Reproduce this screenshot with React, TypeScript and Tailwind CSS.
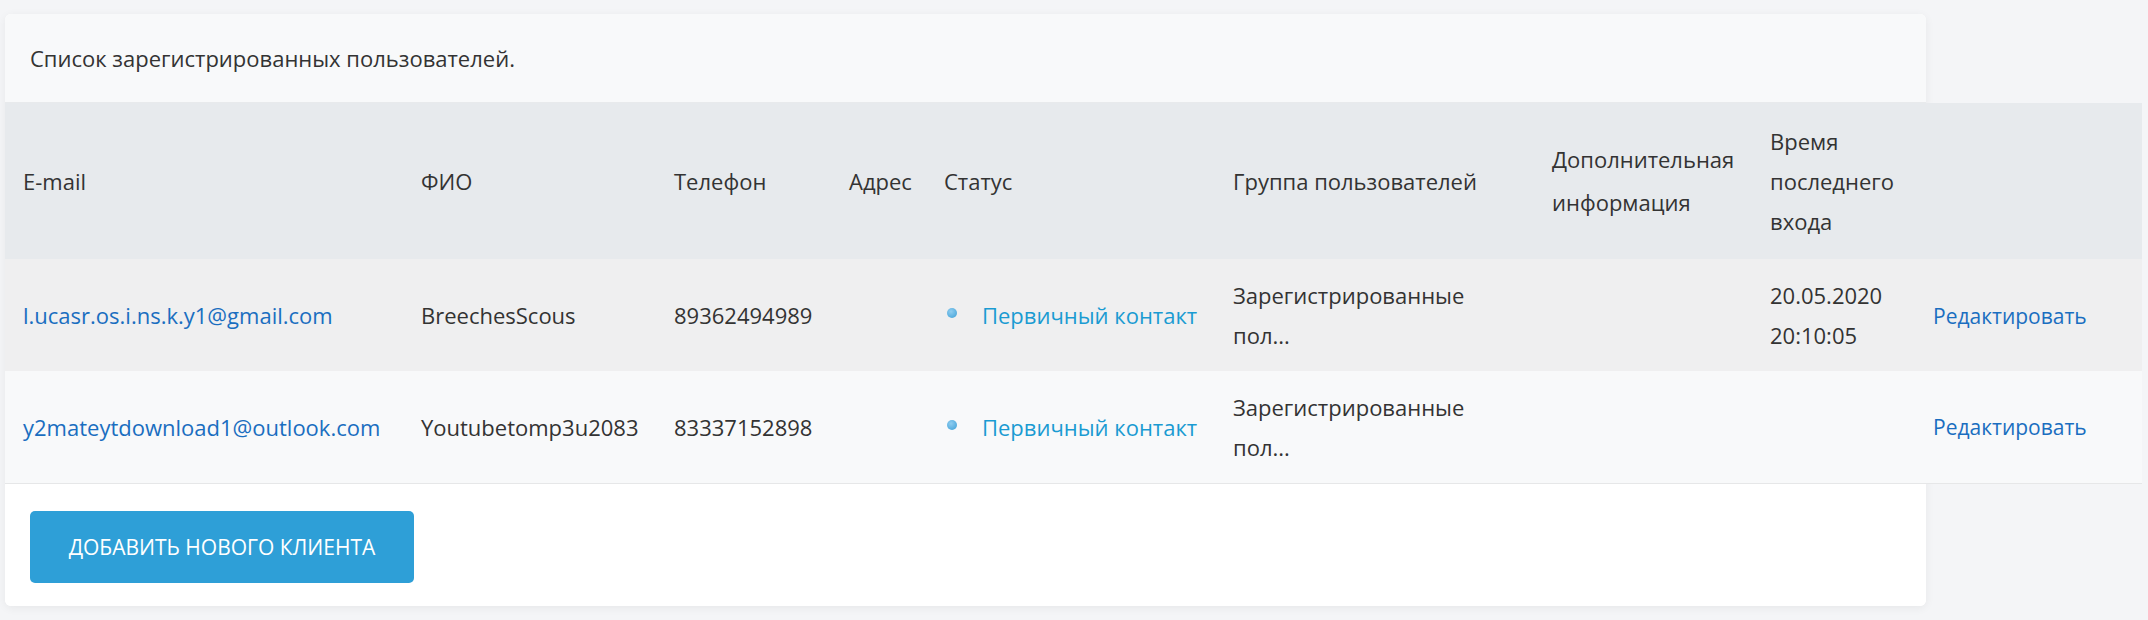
const font = { fontFamily: '"Open Sans", "Noto Sans", sans-serif' };

type User = {
  email: string;
  name: string;
  phone: string;
  lastLogin: string[];
};

const users: User[] = [
  {
    email: 'l.ucasr.os.i.ns.k.y1@gmail.com',
    name: 'BreechesScous',
    phone: '89362494989',
    lastLogin: ['20.05.2020', '20:10:05'],
  },
  {
    email: 'y2mateytdownload1@outlook.com',
    name: 'Youtubetomp3u2083',
    phone: '83337152898',
    lastLogin: [],
  },
];

function Lines({ lines }: { lines: string[] }) {
  return (
    <>
      {lines.map((l) => (
        <span key={l} className="block">
          {l}
        </span>
      ))}
    </>
  );
}

const th = 'font-normal pl-[18px] py-[18px]';

export default function App() {
  return (
    <div
      className="min-h-screen bg-[#f4f5f7] pt-[14px] pl-[5px] text-[#333] text-[22px] leading-[40px]"
      style={font}
    >
      <div className="w-[1921px] rounded-[6px] bg-white shadow-[0_2px_10px_rgba(0,0,0,0.06)]">
        <div className="h-[89px] rounded-t-[6px] bg-[#f8f9fa] border-b border-[#e8eaec] px-[25px] flex items-center">
          Список зарегистрированных пользователей.
        </div>

        <table className="table-fixed border-collapse w-[2137px] text-left">
          <colgroup>
            <col className="w-[398px]" />
            <col className="w-[253px]" />
            <col className="w-[175px]" />
            <col className="w-[95px]" />
            <col className="w-[289px]" />
            <col className="w-[319px]" />
            <col className="w-[218px]" />
            <col className="w-[163px]" />
            <col className="w-[227px]" />
          </colgroup>
          <thead>
            <tr className="bg-[#e7eaed] align-middle">
              <th className={th}>E-mail</th>
              <th className={th}>ФИО</th>
              <th className={th}>Телефон</th>
              <th className={th}>Адрес</th>
              <th className={th}>Статус</th>
              <th className={th}>Группа пользователей</th>
              <th className={`${th} leading-[43px]`}>
                <Lines lines={['Дополнительная', 'информация']} />
              </th>
              <th className={`${th} leading-[40px]`}>
                <Lines lines={['Время', 'последнего', 'входа']} />
              </th>
              <th className={th}></th>
            </tr>
          </thead>
          <tbody>
            {users.map((u, i) => (
              <tr
                key={u.email}
                className={`h-[112px] align-middle ${i === 0 ? 'bg-[#efeff0]' : 'bg-[#f8f9fa] border-b border-[#e6e7e8]'}`}
              >
                <td className="pl-[18px] py-[16px]">
                  <a href="#" className="text-[#1a6ec0]">
                    {u.email}
                  </a>
                </td>
                <td className="pl-[18px]">{u.name}</td>
                <td className="pl-[18px]">{u.phone}</td>
                <td className="pl-[18px]"></td>
                <td className="pl-[21px]">
                  <div className="flex items-center gap-[25px]">
                    <span className="w-[10px] h-[10px] rounded-full bg-[radial-gradient(circle_at_40%_35%,#8fcdf0,#3d9fd6)] -translate-y-[2px]" />
                    <a href="#" className="text-[#1a9bd2]">
                      Первичный контакт
                    </a>
                  </div>
                </td>
                <td className="pl-[18px]">
                  <Lines lines={['Зарегистрированные', 'пол...']} />
                </td>
                <td className="pl-[18px]"></td>
                <td className="pl-[18px]">
                  <Lines lines={u.lastLogin} />
                </td>
                <td className="pl-[18px]">
                  <a href="#" className="text-[#1a6ec0] text-[21px]">
                    Редактировать
                  </a>
                </td>
              </tr>
            ))}
          </tbody>
        </table>

        <div className="rounded-b-[6px] bg-white pl-[25px] pt-[27px] pb-[23px]">
          <button className="h-[72px] w-[384px] rounded-[5px] bg-[#2e9fd7] text-white text-[21px] uppercase">
            Добавить нового клиента
          </button>
        </div>
      </div>
    </div>
  );
}
